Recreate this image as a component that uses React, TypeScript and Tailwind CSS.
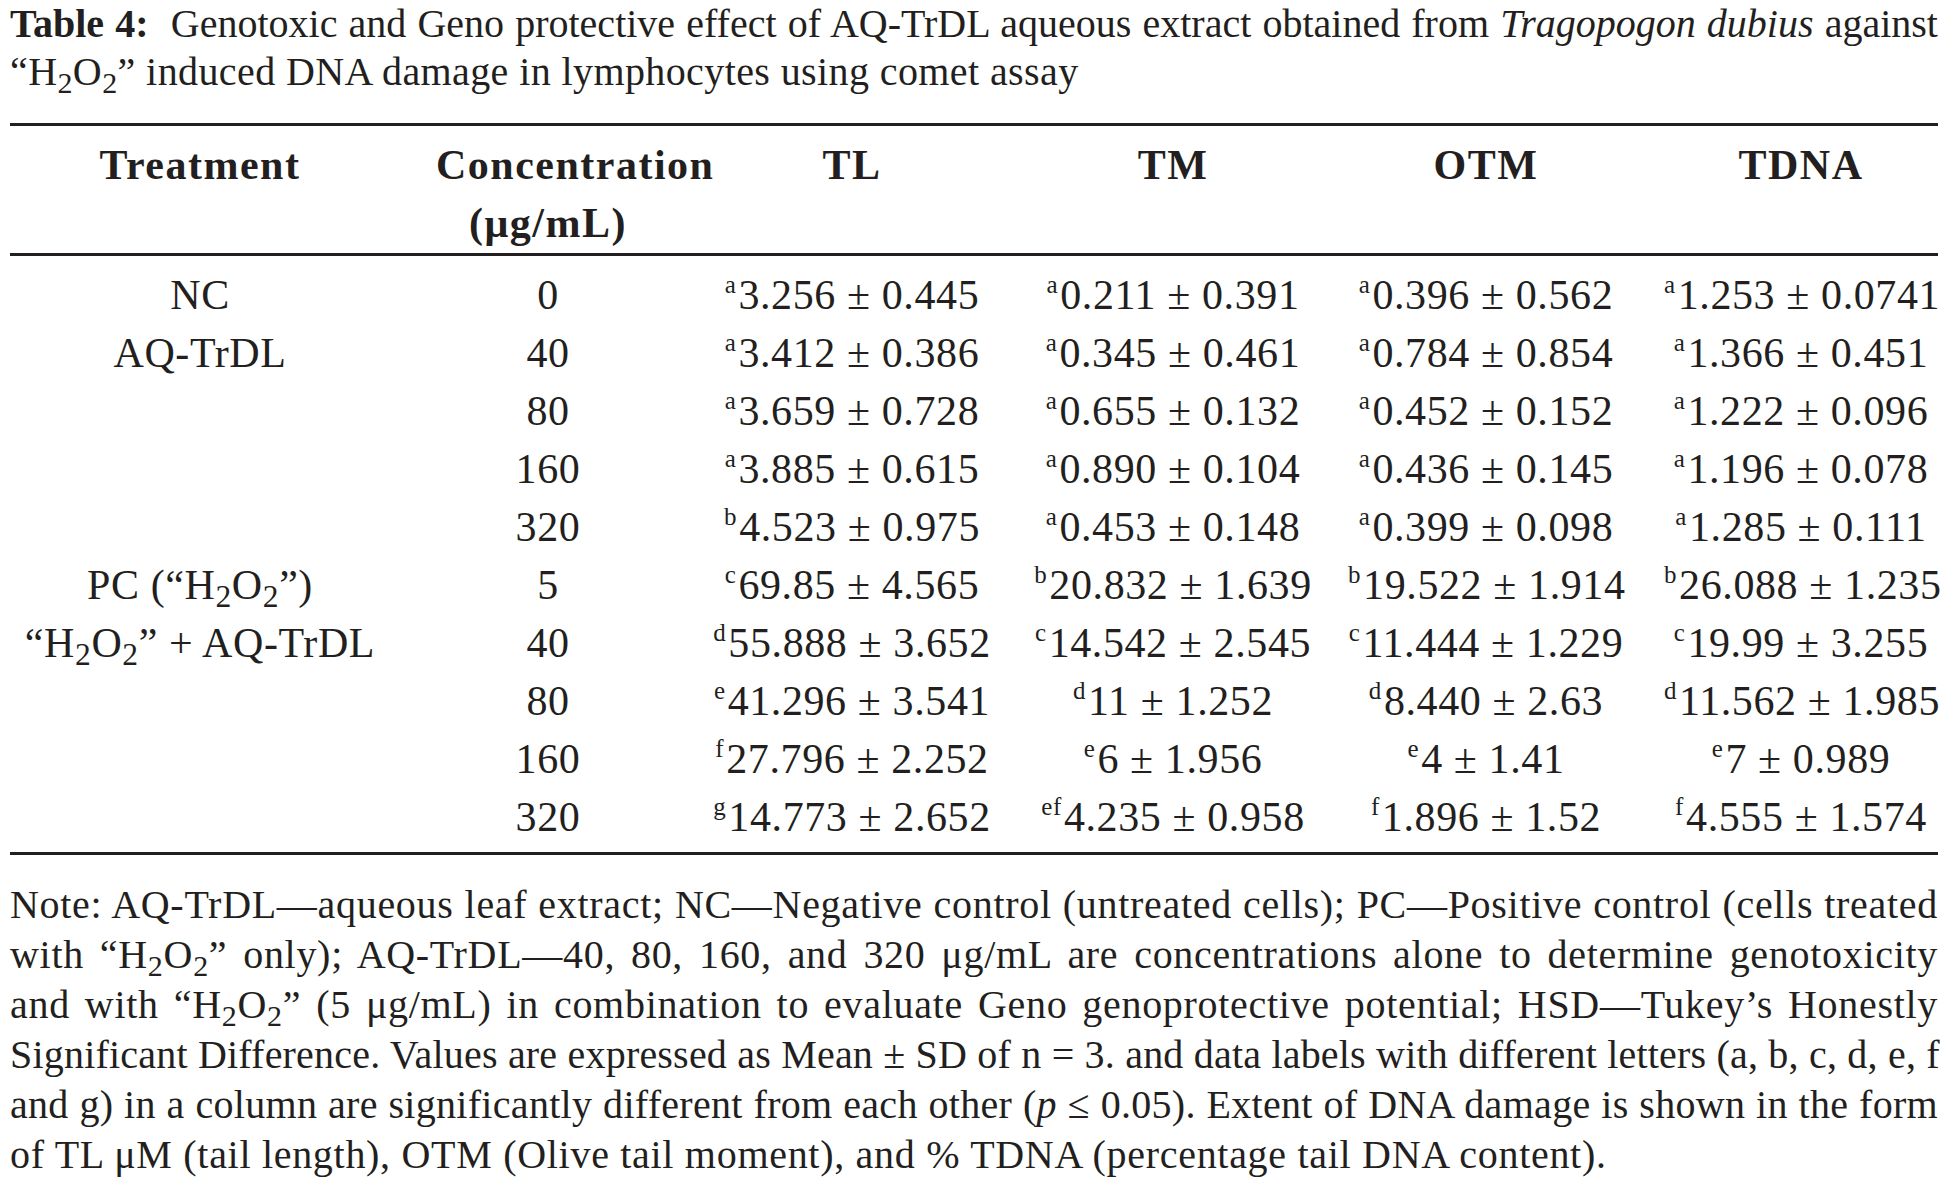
import React from 'react';

type Cell = [string, string];

type Row = {
    treatment?: React.ReactNode;
    conc: string;
    values: Cell[];
};

const H2O2 = () => (
    <>
        H<sub>2</sub>O<sub>2</sub>
    </>
);

const rows: Row[] = [
    { treatment: 'NC', conc: '0', values: [['a', '3.256 ± 0.445'], ['a', '0.211 ± 0.391'], ['a', '0.396 ± 0.562'], ['a', '1.253 ± 0.0741']] },
    { treatment: 'AQ-TrDL', conc: '40', values: [['a', '3.412 ± 0.386'], ['a', '0.345 ± 0.461'], ['a', '0.784 ± 0.854'], ['a', '1.366 ± 0.451']] },
    { conc: '80', values: [['a', '3.659 ± 0.728'], ['a', '0.655 ± 0.132'], ['a', '0.452 ± 0.152'], ['a', '1.222 ± 0.096']] },
    { conc: '160', values: [['a', '3.885 ± 0.615'], ['a', '0.890 ± 0.104'], ['a', '0.436 ± 0.145'], ['a', '1.196 ± 0.078']] },
    { conc: '320', values: [['b', '4.523 ± 0.975'], ['a', '0.453 ± 0.148'], ['a', '0.399 ± 0.098'], ['a', '1.285 ± 0.111']] },
    {
        treatment: <>PC (“<H2O2 />”)</>,
        conc: '5',
        values: [['c', '69.85 ± 4.565'], ['b', '20.832 ± 1.639'], ['b', '19.522 ± 1.914'], ['b', '26.088 ± 1.235']],
    },
    {
        treatment: <>“<H2O2 />” + AQ-TrDL</>,
        conc: '40',
        values: [['d', '55.888 ± 3.652'], ['c', '14.542 ± 2.545'], ['c', '11.444 ± 1.229'], ['c', '19.99 ± 3.255']],
    },
    { conc: '80', values: [['e', '41.296 ± 3.541'], ['d', '11 ± 1.252'], ['d', '8.440 ± 2.63'], ['d', '11.562 ± 1.985']] },
    { conc: '160', values: [['f', '27.796 ± 2.252'], ['e', '6 ± 1.956'], ['e', '4 ± 1.41'], ['e', '7 ± 0.989']] },
    { conc: '320', values: [['g', '14.773 ± 2.652'], ['ef', '4.235 ± 0.958'], ['f', '1.896 ± 1.52'], ['f', '4.555 ± 1.574']] },
];

// column widths picked so each column's centre sits where the scan has it
const grid = 'grid grid-cols-[380px_316px_292px_350px_276px_314px]';

const Value = ({ cell }: { cell: Cell }) => (
    <span>
        <sup className="text-[25px] top-[-0.66em] pr-[2px]">{cell[0]}</sup>
        {cell[1]}
    </span>
);

// one printed line, stretched to the full measure
const JLine = ({ children, last = false, className = '' }: { children: React.ReactNode; last?: boolean; className?: string }) => (
    <div className={`${last ? 'whitespace-nowrap' : 'whitespace-nowrap text-justify [text-align-last:justify]'} ${className}`}>
        {children}
    </div>
);

export default function App() {
    return (
        <div className="w-[1957px] h-[1179px] overflow-hidden bg-white text-[#231f20] font-['Liberation_Serif','Times_New_Roman',serif]">
            <div className="w-[1928px] ml-[10px]">
                {/* caption */}
                <div className="text-[40px] leading-[48px] tracking-[0.4px]">
                    <JLine className="tracking-normal">
                        <b>Table 4:</b>&nbsp; Genotoxic and Geno protective effect of AQ-TrDL aqueous extract obtained from{' '}
                        <i>Tragopogon dubius</i> against
                    </JLine>
                    <JLine last>
                        “<H2O2 />” induced DNA damage in lymphocytes using comet assay
                    </JLine>
                </div>

                {/* table */}
                <div className="mt-[27px] border-t-[3px] border-b-[3px] border-[#231f20] text-[42px] leading-[58px] tracking-[0.6px]">
                    <div className={`${grid} pt-[10px] pb-[1px] border-b-[3px] border-[#231f20] font-bold tracking-[1.5px]`}>
                        <div className="text-center">Treatment</div>
                        <div className="flex flex-col">
                            <div className="ml-[46px] text-center whitespace-nowrap">Concentration</div>
                            <div className="text-center">(μg/mL)</div>
                        </div>
                        <div className="text-center">TL</div>
                        <div className="text-center">TM</div>
                        <div className="text-center">OTM</div>
                        <div className="pl-[40px] text-center">TDNA</div>
                    </div>

                    <div className="pt-[10px] pb-[6px]">
                        {rows.map((r, i) => (
                            <div key={i} className={`${grid} whitespace-nowrap`}>
                                <div className="text-center">{r.treatment}</div>
                                <div className="text-center">{r.conc}</div>
                                <div className="text-center"><Value cell={r.values[0]} /></div>
                                <div className="text-center"><Value cell={r.values[1]} /></div>
                                <div className="text-center"><Value cell={r.values[2]} /></div>
                                <div className="pl-[40px] text-center"><Value cell={r.values[3]} /></div>
                            </div>
                        ))}
                    </div>
                </div>

                {/* note */}
                <div className="mt-[25px] text-[40px] leading-[50px] tracking-[0.7px]">
                    <JLine>
                        Note: AQ-TrDL—aqueous leaf extract; NC—Negative control (untreated cells); PC—Positive control (cells treated
                    </JLine>
                    <JLine>
                        with “<H2O2 />” only); AQ-TrDL—40, 80, 160, and 320 μg/mL are concentrations alone to determine genotoxicity
                    </JLine>
                    <JLine>
                        and with “<H2O2 />” (5 μg/mL) in combination to evaluate Geno genoprotective potential; HSD—Tukey’s Honestly
                    </JLine>
                    <JLine className="tracking-[0.2px]">
                        Significant Difference. Values are expressed as Mean ± SD of n = 3. and data labels with different letters (a, b, c, d, e, f
                    </JLine>
                    <JLine className="tracking-[0.3px]">
                        and g) in a column are significantly different from each other (<i>p</i> ≤ 0.05). Extent of DNA damage is shown in the form
                    </JLine>
                    <JLine last>
                        of TL μM (tail length), OTM (Olive tail moment), and % TDNA (percentage tail DNA content).
                    </JLine>
                </div>
            </div>
        </div>
    );
}
